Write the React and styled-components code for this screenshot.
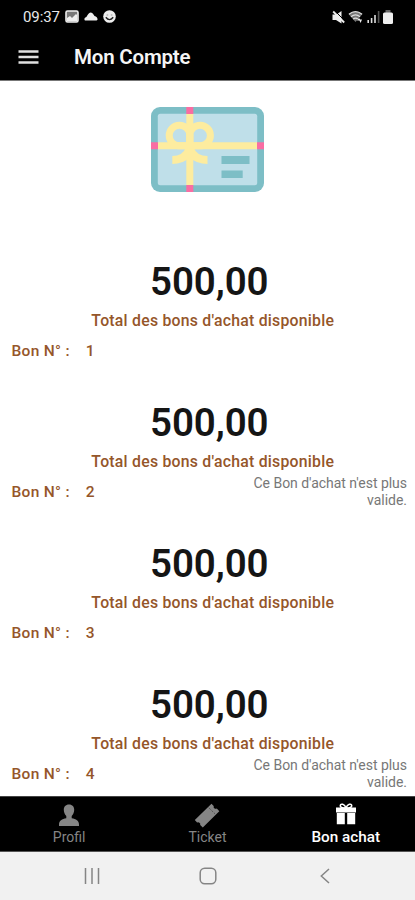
import React from 'react';
import styled, { createGlobalStyle } from 'styled-components';

const GlobalStyle = createGlobalStyle`
  * {
    box-sizing: border-box;
  }
  body {
    margin: 0;
    background: #fff;
    font-family: Roboto, 'Liberation Sans', sans-serif;
  }
  svg {
    display: block;
    flex-shrink: 0;
  }
`;

const Screen = styled.div`
  display: flex;
  flex-direction: column;
  width: 100%;
  height: 900px;
  overflow: hidden;
`;

const StatusBar = styled.div`
  display: flex;
  align-items: center;
  justify-content: space-between;
  flex-shrink: 0;
  height: 33px;
  padding: 0 22px 0 23px;
  background: #000;
  color: #e8e8e8;
`;

const StatusGroup = styled.div`
  display: flex;
  align-items: center;
  gap: ${props => props.$gap}px;
`;

const Clock = styled.span`
  font-size: 15px;
  font-weight: 400;
  line-height: 18px;
  letter-spacing: -0.1px;
`;

const AppBar = styled.header`
  display: flex;
  align-items: center;
  flex-shrink: 0;
  gap: 35px;
  height: 48px;
  padding: 0 18px;
  border-bottom: 1px solid #777;
  background: #000;
  color: #f5f5f5;
`;

const Title = styled.h1`
  margin: 0;
  font-size: 20.5px;
  font-weight: 600;
  line-height: 26px;
  letter-spacing: -0.2px;
`;

const Content = styled.main`
  flex: 1;
  min-height: 0;
  overflow: hidden;
`;

const Hero = styled.div`
  display: flex;
  justify-content: center;
  height: 171px;
  padding-top: 26px;
`;

const Voucher = styled.section`
  display: flex;
  flex-direction: column;
  height: 141px;
  padding: 7px 8px 0 11.5px;
`;

const Amount = styled.div`
  color: #151515;
  font-size: 38.5px;
  font-weight: 600;
  line-height: 46px;
  letter-spacing: -0.1px;
  text-align: center;
`;

const Caption = styled.div`
  margin: 6px 0 3px;
  padding-left: 7px;
  color: #95562a;
  font-size: 15.8px;
  font-weight: 500;
  line-height: 20px;
  letter-spacing: 0.24px;
  text-align: center;
`;

const VoucherRow = styled.div`
  display: flex;
  align-items: center;
  justify-content: space-between;
  height: 34px;
`;

const Label = styled.div`
  display: flex;
  gap: 16px;
  color: #95562a;
  font-size: 15.5px;
  font-weight: 500;
  line-height: 20px;
  letter-spacing: 0.3px;
`;

const Notice = styled.div`
  width: 160px;
  color: #777;
  font-size: 14px;
  line-height: 17px;
  letter-spacing: -0.03px;
  text-align: right;
`;

const TabBar = styled.nav`
  display: flex;
  flex-shrink: 0;
  height: 56px;
  border-top: 1px solid #444;
  border-bottom: 1px solid #555;
  background: #000;
`;

const Tab = styled.div`
  display: flex;
  flex: 1;
  flex-direction: column;
  align-items: center;
  padding-top: 6px;
  color: ${props => (props.$active ? '#fff' : '#858585')};
  font-size: ${props => (props.$active ? 15.3 : 14)}px;
  font-weight: ${props => (props.$active ? 500 : 400)};
  line-height: 18px;

  svg {
    margin-bottom: 1px;
    overflow: visible;
  }
`;

const SystemBar = styled.div`
  display: flex;
  flex-shrink: 0;
  height: 48px;
  padding: 0 32px 0 34px;
  background: #f1f1f1;
`;

const SystemKey = styled.div`
  display: flex;
  flex: 1;
  align-items: center;
  justify-content: center;
`;

const PictureIcon = () => (
  <svg width='14' height='13' viewBox='0 0 14 13'>
    <rect x='1' y='1' width='12' height='11' rx='1.5' fill='#777' stroke='#eee' strokeWidth='1.6' />
    <path d='M2 11V8l3-2 2 2 4-4 1 1v6z' fill='#eee' />
  </svg>
);

const CloudIcon = () => (
  <svg width='14' height='9' viewBox='0 0 14 9'>
    <path d='M1.500 8.500C0 8.500 0 5.500 2 5.200 3.200 4.800 4 .5 6.800.5 9 .5 9.600 3 10.500 4 13.500 4.500 14.500 8.500 12.500 8.500z' fill='#eee' />
  </svg>
);

const SmileIcon = () => (
  <svg width='13' height='13' viewBox='0 0 13 13'>
    <circle cx='6.500' cy='6.500' r='6.300' fill='#eee' />
    <path d='M2.800 7.300Q6.500 12 10.200 7.300' fill='none' stroke='#222' strokeWidth='1.400' />
    <path d='M3.600 5h1.600M7.800 5h1.600' stroke='#999' />
  </svg>
);

const MuteIcon = () => (
  <svg width='13' height='14' viewBox='0 0 13 14'>
    <path d='M.5 4.500h4L9.500 1v12.500L4 10H.5z' fill='#eee' />
    <path d='M3 1l10 10' stroke='#000' strokeWidth='1' />
    <path d='M1.200 1.500l11 11' stroke='#eee' strokeWidth='1.800' />
  </svg>
);

const WifiIcon = () => (
  <svg width='16' height='14' viewBox='0 0 16 14'>
    <path d='M.5 4Q7.500-1.500 14.500 4L7.500 12z' fill='#777' />
    <path d='M1 4.200Q7.500-1 14 4.200M3 6.700Q7.500 3.200 12 6.700M5.200 9Q7.500 7.200 9.800 9' fill='none' stroke='#ddd' strokeWidth='1.300' />
    <path d='M11 8l-2 2.500h4zM14 9.500h-3l1.600 3.500z' fill='#eee' />
  </svg>
);

const SignalIcon = () => (
  <svg width='13' height='13' viewBox='0 0 13 13'>
    <path d='M1.200 10v3M4.600 8v5M8 5v8' stroke='#ddd' strokeWidth='1.600' />
    <path d='M11.600 1v12' stroke='#555' strokeWidth='1.600' />
  </svg>
);

const BatteryIcon = () => (
  <svg width='10' height='14' viewBox='0 0 10 14'>
    <rect x='2.500' y='0' width='5' height='3' fill='#666' />
    <rect x='0' y='2.500' width='10' height='11.500' rx='1.500' fill='#eee' />
  </svg>
);

const MenuIcon = () => (
  <svg width='21' height='16' viewBox='0 0 21 16'>
    <path d='M.5 2.500h20M.5 8h20M.5 13.500h20' stroke='#e0e0e0' strokeWidth='2.400' />
  </svg>
);

const GiftCard = () => (
  <svg width='113' height='85' viewBox='0 0 113 85'>
    <rect width='113' height='85' rx='9' fill='#7dbec6' />
    <rect x='6.800' y='6.800' width='99.400' height='71.400' rx='2.500' fill='#bfdfe9' />
    <path d='M38.800 7v71M7 38.800h99' stroke='#fdec9f' strokeWidth='7' />
    <g fill='none' stroke='#fdec9f' strokeWidth='7'>
      <path d='M38.800 38.800H28A10.300 10.300 0 1 1 38.800 28Z' />
      <path d='M38.800 38.800H50A10.300 10.300 0 1 0 38.800 28Z' />
    </g>
    <path d='M35 40Q32 49 21.300 49v8Q32 57 38.800 50.500Q45.500 57 56.500 57v-8Q45.500 49 42.500 40z' fill='#fdec9f' />
    <path d='M35.300 0h7v7h-7zM35.300 78h7v7h-7zM0 35.300h7v7H0zM106 35.300h7v7h-7z' fill='#f96da3' />
    <path d='M70.500 49h28v8h-28zM70.500 63.500h21.200v7.500H70.500z' fill='#7dbec6' />
  </svg>
);

const ProfileIcon = () => (
  <svg width='22' height='24' viewBox='0 0 22 24'>
    <path d='M11 1.500c-3.400 0-5.200 2.300-5.200 5.300 0 2.500 1 4.900 2.500 6.200v2.200C4 16 1 17.600 1 21.500V23h20v-1.500c0-3.900-3-5.500-7.300-6.300V13c1.500-1.300 2.500-3.700 2.500-6.200 0-3-1.800-5.300-5.200-5.300z' fill='#858585' />
  </svg>
);

const TicketIcon = () => (
  <svg width='26' height='24' viewBox='0 0 26 24'>
    <path d='M17.500.8l2.200 2.200q-.6 2 1.300 2.700.9.300 1.800-.1l2.500 2.600L8.800 24.600l-2.600-2.500q.6-2-1.200-2.700-1-.4-1.900.1L.8 17z' fill='#858585' />
    <path d='M14.800 4.800l6.500 6.300' stroke='#333' strokeWidth='.8' strokeDasharray='1.200 1.200' />
  </svg>
);

const GiftIcon = () => (
  <svg width='20' height='24' viewBox='0 0 20 24'>
    <path d='M0 4.500h20v5H0zM.8 9.900h8v11.300h-8zM11.200 9.900h8v11.300h-8z' fill='#fff' />
    <path d='M10 5C8.500 1 4.500 0 4.300 2.800 4.200 4.200 6 5 10 5zM10 5C11.500 1 15.500 0 15.700 2.800 15.800 4.200 14 5 10 5z' fill='none' stroke='#fff' strokeWidth='1.600' />
  </svg>
);

const RecentsIcon = () => (
  <svg width='16' height='16' viewBox='0 0 16 16'>
    <path d='M1.500 0v16M8 0v16M14.500 0v16' stroke='#858585' strokeWidth='1.500' />
  </svg>
);

const HomeIcon = () => (
  <svg width='18' height='18' viewBox='0 0 18 18'>
    <rect x='1.200' y='1.200' width='15.600' height='15.600' rx='4.500' fill='none' stroke='#858585' strokeWidth='1.500' />
  </svg>
);

const BackIcon = () => (
  <svg width='10' height='16' viewBox='0 0 10 16'>
    <path d='M9 1L1.300 8 9 15' fill='none' stroke='#858585' strokeWidth='1.500' />
  </svg>
);

const vouchers = [
  { number: 1, amount: '500,00', valid: true },
  { number: 2, amount: '500,00', valid: false },
  { number: 3, amount: '500,00', valid: true },
  { number: 4, amount: '500,00', valid: false }
];

const App = () => (
  <Screen>
    <GlobalStyle />
    <StatusBar>
      <StatusGroup $gap={5}>
        <Clock>09:37</Clock>
        <PictureIcon />
        <CloudIcon />
        <SmileIcon />
      </StatusGroup>
      <StatusGroup $gap={3}>
        <MuteIcon />
        <WifiIcon />
        <SignalIcon />
        <BatteryIcon />
      </StatusGroup>
    </StatusBar>
    <AppBar>
      <MenuIcon />
      <Title>Mon Compte</Title>
    </AppBar>
    <Content>
      <Hero>
        <GiftCard />
      </Hero>
      {vouchers.map(({ number, amount, valid }) => (
        <Voucher key={number}>
          <Amount>{amount}</Amount>
          <Caption>Total des bons d'achat disponible</Caption>
          <VoucherRow>
            <Label>
              <span>Bon N° :</span>
              <span>{number}</span>
            </Label>
            {!valid && <Notice>Ce Bon d'achat n'est plus valide.</Notice>}
          </VoucherRow>
        </Voucher>
      ))}
    </Content>
    <TabBar>
      <Tab>
        <ProfileIcon />
        Profil
      </Tab>
      <Tab>
        <TicketIcon />
        Ticket
      </Tab>
      <Tab $active>
        <GiftIcon />
        Bon achat
      </Tab>
    </TabBar>
    <SystemBar>
      <SystemKey>
        <RecentsIcon />
      </SystemKey>
      <SystemKey>
        <HomeIcon />
      </SystemKey>
      <SystemKey>
        <BackIcon />
      </SystemKey>
    </SystemBar>
  </Screen>
);

export default App;
